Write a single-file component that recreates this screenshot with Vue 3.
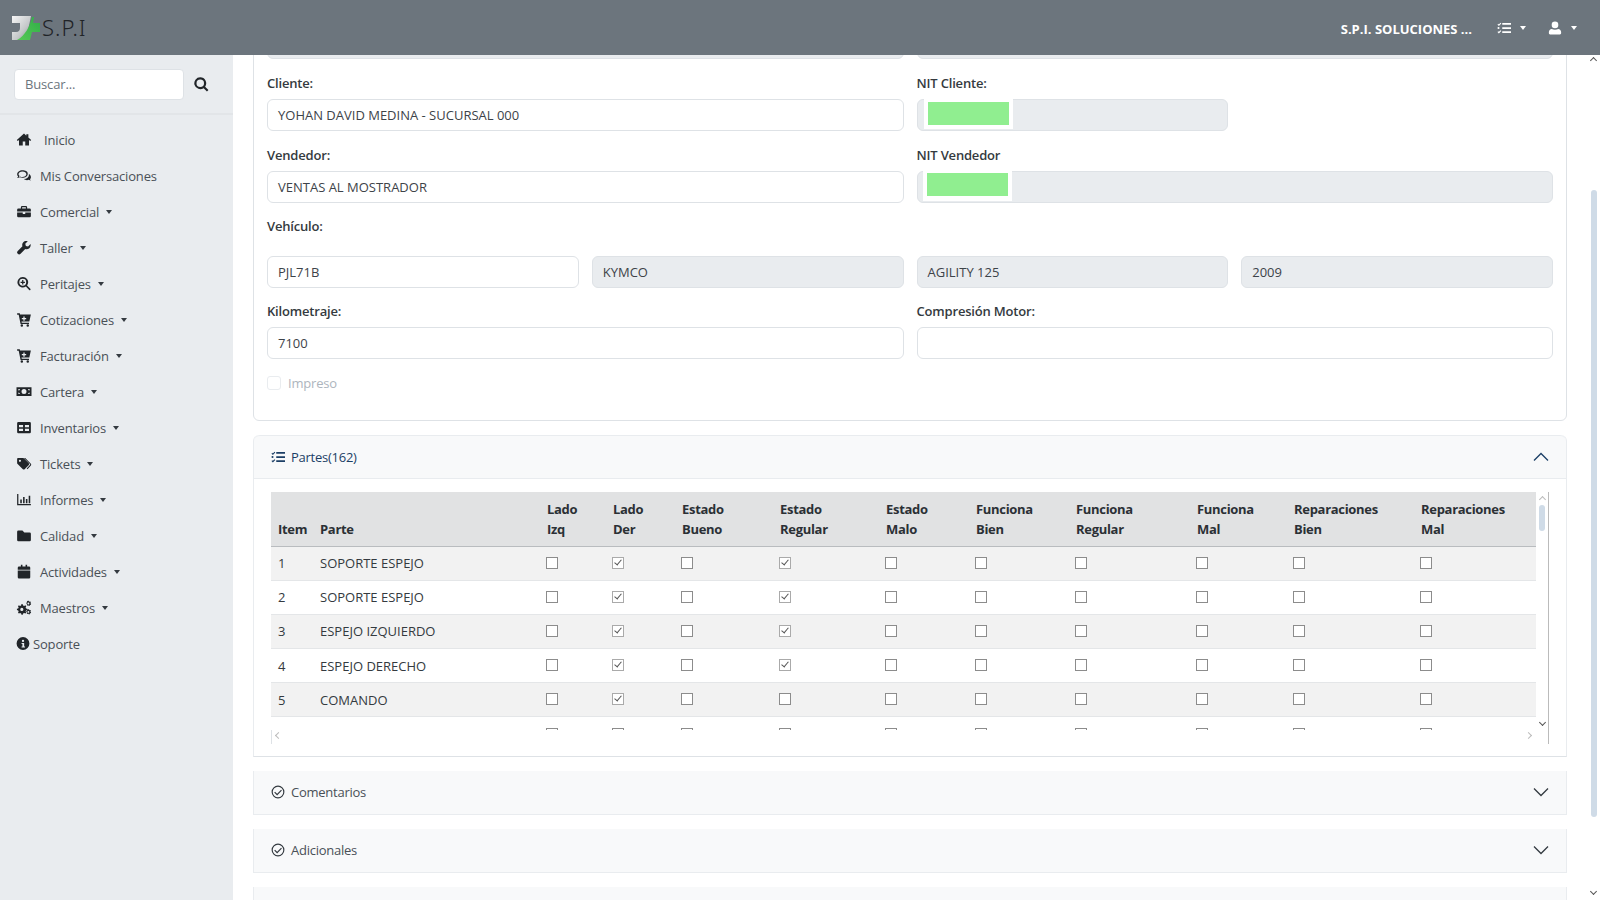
<script setup>
const icons = {
  home: 'M12 2.500 .5 12.600l1.500 1.700L4 12.600V21.500h6v-6.500h4v6.500h6v-8.900l2 1.700 1.500-1.700L19 8.700V3.500h-3.300v2.300z',
  comments: 'M9.500 3.500C5 3.500 1 6.200 1 10c0 1.400.6 2.700 1.600 3.700-.4 1-1.100 1.800-1.600 2.400 1.600 0 3.100-.6 4.200-1.300 1.200.5 2.800.8 4.300.8 4.500 0 8.500-2.700 8.500-6.600S14 3.500 9.500 3.500zm0 2c3.500 0 6.300 2 6.300 4.500s-2.800 4.400-6.300 4.400c-1.300 0-2.700-.3-3.900-1-.6.5-1.100.8-1.600 1 .4-.7.6-1.300.7-1.900C3.700 11.700 3.200 11 3.200 10c0-2.500 2.800-4.500 6.300-4.500zM19.500 9c.2.600.4 1.200.4 2 0 3.400-3.300 6.100-7.900 6.700 1.100 1.100 2.800 1.800 4.800 1.800 1 0 2-.2 2.900-.6 1 .6 2.100 1 3.300 1-.5-.5-1-1.200-1.400-2 1-.9 1.500-2 1.500-3.200 0-2.300-1.300-4.400-3.600-5.700z',
  briefcase: 'M9 3h6a2 2 0 0 1 2 2v2h4a2 2 0 0 1 2 2v3H1V9a2 2 0 0 1 2-2h4V5a2 2 0 0 1 2-2zm0 2v2h6V5zM1 13.500h9V16h4v-2.500h9V19a2 2 0 0 1-2 2H3a2 2 0 0 1-2-2z',
  wrench: 'M22.500 6.500 18.500 10.500 15 9.500 14 6 18 2C15.500 1 12.500 1.500 10.800 3.500 9 5.300 8.700 7.900 9.500 10L2 17.500a3 3 0 0 0 4.500 4.500l7.500-7.500c2.100.8 4.700.4 6.500-1.400 2-1.800 2.500-4.200 2-6.600z',
  searchPlus: 'M10 1.500a8.500 8.500 0 1 0 5 15.400l5.300 5.300a1.200 1.200 0 0 0 1.800-1.800l-5.200-5.300A8.500 8.500 0 0 0 10 1.500zm0 3a5.500 5.500 0 1 1 0 11 5.500 5.500 0 0 1 0-11zM9 6.500v2.500H6.500v2H9v2.500h2V11h2.500V9H11V6.500z',
  cart: 'M1 2h4.200l.6 2H23l-2.500 11H8l.4 2H20v2.200H6.500L3.500 4.200H1zM11 7v2.500H8.500v2H11V14h2v-2.500h2.500v-2H13V7zM8.500 19.500a2 2 0 1 1 0 4 2 2 0 0 1 0-4zM18 19.500a2 2 0 1 1 0 4 2 2 0 0 1 0-4z',
  money: 'M0 5h24v14H0zm12 3a4 4 0 1 0 0 8 4 4 0 0 0 0-8zM3 8v2.500A2.500 2.500 0 0 0 5.500 8zm15.500 0A2.500 2.500 0 0 0 21 10.500V8zM3 13.500V16h2.500A2.500 2.500 0 0 0 3 13.500zM21 13.500A2.500 2.500 0 0 0 18.500 16H21z',
  table: 'M3 3h18a2 2 0 0 1 2 2v14a2 2 0 0 1-2 2H3a2 2 0 0 1-2-2V5a2 2 0 0 1 2-2zm1 5v3.500h6.500V8zm9.500 0v3.500H20V8zM4 14v3.500h6.500V14zm9.500 0v3.500H20V14z',
  tags: 'M1 4.500A1.500 1.500 0 0 1 2.500 3h7.800a2 2 0 0 1 1.400.6l8 8a2 2 0 0 1 0 2.800l-6.700 6.700a2 2 0 0 1-2.800 0l-8-8A2 2 0 0 1 1 11.300zM5.500 6a1.700 1.700 0 1 0 0 3.400 1.700 1.700 0 0 0 0-3.400zM14 3l9 9.300a2.300 2.300 0 0 1 0 3L17.500 21l-1.200-1.200 5.200-5.300a1 1 0 0 0 0-1.600L12 3z',
  chart: 'M1 3h2v16h20v2H1zM6 12h2.500v6H6zM10.500 8H13v10h-2.500zM15 11h2.500v7H15zM19.500 6H22v12h-2.500z',
  folder: 'M3 4h6.500l3 3H21a2 2 0 0 1 2 2v10a2 2 0 0 1-2 2H3a2 2 0 0 1-2-2V6a2 2 0 0 1 2-2z',
  calendar: 'M7 1h2.500v3h5V1H17v3h3a2 2 0 0 1 2 2v3H2V6a2 2 0 0 1 2-2h3zM2 10.500h20V21a2 2 0 0 1-2 2H4a2 2 0 0 1-2-2z',
  cogs: 'M8 6.500l2 .2.600 2 1.700.8 1.800-1 1.500 1.500-1 1.800.7 1.700 2 .6v2l-2 .6-.7 1.700 1 1.800-1.500 1.500-1.800-1-1.700.7-.6 2h-2l-.6-2-1.700-.7-1.800 1-1.500-1.500 1-1.800-.7-1.700-2-.6v-2l2-.6.700-1.700-1-1.800L3.800 8.500l1.800 1 1.700-.8zM8.500 12.500a2.500 2.500 0 1 0 0 5 2.500 2.500 0 0 0 0-5zM19 1l1 .2.300 1 1 .5 1-.4.800 1.200-.7.800.1 1.200.9.500-.3 1.400-1 .1-.8.800-.1 1-1.400.2-.500-.9-1.100-.2-.9.600-1-1 .6-.9-.3-1.100-1-.3V4.300l1-.3.500-1-.5-.900 1.100-.900.900.7zm0 3a1.500 1.500 0 1 0 0 3 1.500 1.500 0 0 0 0-3zM19 14.500l1 .2.300 1 1 .5 1-.4.800 1.200-.7.800.1 1.200.9.500-.3 1.400-1 .1-.8.800-.1 1-1.400.2-.500-.9-1.100-.2-.9.600-1-1 .6-.9-.3-1.100-1-.3v-1.400l1-.3.500-1-.5-.900 1.100-.900.900.7zm0 3a1.500 1.500 0 1 0 0 3 1.500 1.500 0 0 0 0-3z',
  info: 'M12 1a11 11 0 1 0 0 22 11 11 0 0 0 0-22zm0 4.500a2 2 0 1 1 0 4 2 2 0 0 1 0-4zM9.500 11H14v6h1.500v2h-6v-2H11v-4H9.500z',
  tasks: 'M9 3.500h15v3H9zM9 10.500h15v3H9zM9 17.500h15v3H9zM2.200 4.800l1 1L6 3l1.400 1.400-4.200 4.200L.8 6.200zM.8 12a1.800 1.800 0 1 1 3.600 0 1.800 1.800 0 0 1-3.600 0zM2.200 17.500l1 1L6 15.700l1.400 1.400-4.200 4.200L.8 18.900z',
  user: 'M12 1a5.700 5.700 0 1 1 0 11.400A5.700 5.700 0 0 1 12 1zM6.500 13.500C8 14.300 10 14.800 12 14.800s4-.5 5.500-1.300c3 .3 5 2.700 5 5.500V21a2 2 0 0 1-2 2h-17a2 2 0 0 1-2-2v-2c0-2.800 2-5.200 5-5.500z',
  search: 'M10 .5a9.500 9.500 0 1 0 5.400 17.300l5.300 5.300 2.400-2.400-5.300-5.300A9.500 9.500 0 0 0 10 .5zm0 3.500a6 6 0 1 1 0 12 6 6 0 0 1 0-12z',
  check: 'M12 1a11 11 0 1 0 0 22 11 11 0 0 0 0-22zm0 2a9 9 0 1 1 0 18 9 9 0 0 1 0-18zm5.300 5L10.500 14.800 7 11.400l-1.500 1.400 5 5 8.200-8.300z'
}
const nav = [
  { label: 'Inicio', icon: 'home', caret: false, cls: 'wide' },
  { label: 'Mis Conversaciones', icon: 'comments', caret: false },
  { label: 'Comercial', icon: 'briefcase', caret: true },
  { label: 'Taller', icon: 'wrench', caret: true },
  { label: 'Peritajes', icon: 'searchPlus', caret: true },
  { label: 'Cotizaciones', icon: 'cart', caret: true },
  { label: 'Facturación', icon: 'cart', caret: true },
  { label: 'Cartera', icon: 'money', caret: true },
  { label: 'Inventarios', icon: 'table', caret: true },
  { label: 'Tickets', icon: 'tags', caret: true },
  { label: 'Informes', icon: 'chart', caret: true },
  { label: 'Calidad', icon: 'folder', caret: true },
  { label: 'Actividades', icon: 'calendar', caret: true },
  { label: 'Maestros', icon: 'cogs', caret: true },
  { label: 'Soporte', icon: 'info', caret: false, cls: 'narrow' }
]
const cols = [42, 227, 66, 69, 98, 106, 90, 100, 121, 97, 127, 123]
const heads = [
  ['Item'], ['Parte'], ['Lado', 'Izq'], ['Lado', 'Der'], ['Estado', 'Bueno'], ['Estado', 'Regular'],
  ['Estado', 'Malo'], ['Funciona', 'Bien'], ['Funciona', 'Regular'], ['Funciona', 'Mal'],
  ['Reparaciones', 'Bien'], ['Reparaciones', 'Mal']
]
const rows = [
  { item: '1', parte: 'SOPORTE ESPEJO', checks: [1, 3] },
  { item: '2', parte: 'SOPORTE ESPEJO', checks: [1, 3] },
  { item: '3', parte: 'ESPEJO IZQUIERDO', checks: [1, 3] },
  { item: '4', parte: 'ESPEJO DERECHO', checks: [1, 3] },
  { item: '5', parte: 'COMANDO', checks: [1] },
  { item: '', parte: '', checks: [] }
]
const boxes = [0, 1, 2, 3, 4, 5, 6, 7, 8, 9]
</script>

<template>
  <div class="page">
    <header class="topbar">
      <div class="brand">
        <svg class="logo" viewBox="0 0 30 28">
          <defs>
            <linearGradient id="lg" x1="0" y1="0" x2="1" y2="1">
              <stop offset="0" stop-color="#f6f6f6" />
              <stop offset="0.6" stop-color="#c4c7c9" />
              <stop offset="1" stop-color="#7f858a" />
            </linearGradient>
            <linearGradient id="lgg" x1="1" y1="0" x2="0" y2="1">
              <stop offset="0" stop-color="#2fae47" />
              <stop offset="1" stop-color="#57c957" />
            </linearGradient>
          </defs>
          <path d="M1 2H20L15 26H1V18H5C8 18 9 16 9 14V9H1Z" fill="url(#lg)" />
          <path d="M21 3H23L22 9H29V18H21L19 26H6C14 22 19 12 21 3Z" fill="url(#lgg)" />
        </svg>
        <span class="brand-name">S.P.I</span>
      </div>
      <div class="top-right">
        <strong class="company">S.P.I. SOLUCIONES ...</strong>
        <span class="top-btn"><svg class="ico ico-top" viewBox="0 0 24 24"><path :d="icons.tasks" /></svg><i class="caret" /></span>
        <span class="top-btn"><svg class="ico ico-top" viewBox="0 0 24 24"><path :d="icons.user" /></svg><i class="caret" /></span>
      </div>
    </header>

    <div class="body-row">
      <aside class="sidebar">
        <div class="search-row">
          <div class="search-input">Buscar...</div>
          <svg class="ico search-ico" viewBox="0 0 24 24"><path :d="icons.search" /></svg>
        </div>
        <nav class="nav">
          <a v-for="n in nav" :key="n.label" class="nav-item" :class="n.cls">
            <svg class="ico nav-ico" viewBox="0 0 24 24"><path :d="icons[n.icon]" /></svg>
            <span class="nav-label">{{ n.label }}</span>
            <i v-if="n.caret" class="caret dark" />
          </a>
        </nav>
      </aside>

      <main class="main">
        <div class="content">
          <section class="card">
            <div class="grid two peek">
              <div class="input disabled" />
              <div class="input disabled" />
            </div>

            <div class="grid two">
              <div>
                <label class="label">Cliente:</label>
                <div class="input">YOHAN DAVID MEDINA - SUCURSAL 000</div>
              </div>
              <div>
                <label class="label">NIT Cliente:</label>
                <div class="grid two inner">
                  <div class="input disabled nit"><span class="mask"><span class="green" /></span></div>
                </div>
              </div>
            </div>

            <div class="grid two">
              <div>
                <label class="label">Vendedor:</label>
                <div class="input">VENTAS AL MOSTRADOR</div>
              </div>
              <div>
                <label class="label">NIT Vendedor</label>
                <div class="input disabled nit seller"><span class="mask"><span class="green" /></span></div>
              </div>
            </div>

            <label class="label vehicle-label">Vehículo:</label>
            <div class="grid four">
              <div class="input">PJL71B</div>
              <div class="input disabled">KYMCO</div>
              <div class="input disabled">AGILITY 125</div>
              <div class="input disabled">2009</div>
            </div>

            <div class="grid two">
              <div>
                <label class="label">Kilometraje:</label>
                <div class="input">7100</div>
              </div>
              <div>
                <label class="label">Compresión Motor:</label>
                <div class="input" />
              </div>
            </div>

            <div class="impreso"><span class="soft-check" /><span>Impreso</span></div>
          </section>

          <section class="acc open">
            <div class="acc-head active">
              <svg class="ico acc-ico" viewBox="0 0 24 24"><path :d="icons.tasks" /></svg>
              <span>Partes(162)</span>
              <svg class="chev up" viewBox="0 0 16 10"><path d="M1 1.500 8 8.500 15 1.500" /></svg>
            </div>
            <div class="acc-body">
              <div class="table-frame">
                <div class="table-clip">
                  <table class="parts">
                    <colgroup>
                      <col v-for="(c, i) in cols" :key="i" :style="{ width: c + 'px' }" />
                    </colgroup>
                    <thead>
                      <tr>
                        <th v-for="(h, i) in heads" :key="i">
                          <template v-for="(line, j) in h" :key="j">{{ line }}<br v-if="j < h.length - 1" /></template>
                        </th>
                      </tr>
                    </thead>
                    <tbody>
                      <tr v-for="(r, idx) in rows" :key="idx">
                        <td>{{ r.item }}</td>
                        <td>{{ r.parte }}</td>
                        <td v-for="b in boxes" :key="b">
                          <span class="cb" :class="{ on: r.checks.includes(b) }" />
                        </td>
                      </tr>
                    </tbody>
                  </table>
                </div>
                <div class="hbar"><span class="arrow-l" /><span class="arrow-r" /></div>
                <div class="vbar">
                  <span class="vb-up" />
                  <span class="vb-thumb" />
                  <span class="vb-down" />
                </div>
              </div>
            </div>
          </section>

          <section class="acc">
            <div class="acc-head">
              <svg class="ico acc-ico" viewBox="0 0 24 24"><path :d="icons.check" /></svg>
              <span>Comentarios</span>
              <svg class="chev" viewBox="0 0 16 10"><path d="M1 1.500 8 8.500 15 1.500" /></svg>
            </div>
          </section>
          <section class="acc">
            <div class="acc-head">
              <svg class="ico acc-ico" viewBox="0 0 24 24"><path :d="icons.check" /></svg>
              <span>Adicionales</span>
              <svg class="chev" viewBox="0 0 16 10"><path d="M1 1.500 8 8.500 15 1.500" /></svg>
            </div>
          </section>
          <section class="acc">
            <div class="acc-head" />
          </section>
        </div>

        <div class="page-scroll">
          <span class="ps-up" />
          <span class="ps-thumb" />
          <span class="ps-down" />
        </div>
      </main>
    </div>
  </div>
</template>

<style>
html, body { margin: 0; background: #fff; overflow: hidden; }
</style>

<style scoped>
.page {
  width: 1600px;
  height: 900px;
  display: flex;
  flex-direction: column;
  font-family: "Open Sans", "Noto Sans", "Liberation Sans", sans-serif;
  font-size: 13px;
  color: #212529;
  overflow: hidden;
}
.ico { fill: currentColor; flex: none; display: block; }
.topbar {
  height: 55px;
  flex: none;
  background: #6c757d;
  display: flex;
  align-items: center;
  justify-content: space-between;
  position: relative;
  z-index: 3;
}
.brand { display: flex; align-items: center; margin-left: 11px; }
.logo { width: 30px; height: 28px; }
.brand-name {
  font-family: "Noto Sans", sans-serif;
  font-size: 22px;
  font-weight: 300;
  letter-spacing: 1px;
  color: #1f2327;
  margin-left: 1px;
  margin-top: -2px;
}
.top-right { display: flex; align-items: center; color: #fff; padding-right: 23px; }
.company { font-size: 13px; font-weight: 700; margin-right: 25px; padding-top: 2px; }
.top-btn { display: flex; align-items: center; }
.top-btn + .top-btn { margin-left: 22px; }
.ico-top { width: 14px; height: 14px; }
.caret {
  display: inline-block;
  width: 0;
  height: 0;
  margin-left: 9px;
  border-top: 4px solid currentColor;
  border-left: 3.500px solid transparent;
  border-right: 3.500px solid transparent;
}
.body-row { flex: 1; display: flex; min-height: 0; }
.sidebar { width: 233px; flex: none; background: #e9ecef; }
.search-row {
  height: 60px;
  padding: 14px 24px 0 14px;
  box-sizing: border-box;
  display: flex;
  align-items: flex-start;
  border-bottom: 2px solid #e2e5e8;
}
.search-input {
  width: 171px;
  height: 31px;
  box-sizing: border-box;
  background: #fff;
  border: 1px solid #dee2e6;
  border-radius: 4px;
  padding-left: 10px;
  line-height: 29px;
  color: #6c757d;
  letter-spacing: -0.15px;
}
.search-ico { width: 15px; height: 15px; margin: 8px 0 0 10px; color: #212529; }
.nav { display: flex; flex-direction: column; padding-top: 6.500px; }
.nav-item { height: 36px; display: flex; align-items: center; padding-left: 16px; color: #495057; letter-spacing: -0.17px; }
.nav-ico { width: 16px; height: 15px; color: #212529; margin-right: 8px; }
.nav-item.wide .nav-ico { margin-right: 12px; }
.nav-item.narrow .nav-ico { width: 14px; margin-right: 3px; }
.caret.dark { color: #343a40; margin-left: 7px; }

.main { flex: 1; position: relative; overflow: hidden; }
.content {
  padding: 0 33px 0 20px;
  margin-top: -29px;
  display: flex;
  flex-direction: column;
  gap: 14px;
}
.card {
  border: 1px solid #dee2e6;
  border-radius: 0 0 6px 6px;
  padding: 0 13px 0;
  height: 395px;
  box-sizing: border-box;
}
.grid { display: grid; column-gap: 13px; }
.grid.two { grid-template-columns: 1fr 1fr; margin-bottom: 12px; }
.grid.four { grid-template-columns: repeat(4, 1fr); margin-bottom: 11px; }
.grid.inner { margin-bottom: 0; }
.label {
  display: block;
  font-weight: 600;
  line-height: 20px;
  padding: 1.500px 0 6.500px;
  color: #343a40;
  letter-spacing: -0.18px;
}
.vehicle-label { padding: 1px 0 20px; }
.input {
  height: 32px;
  box-sizing: border-box;
  border: 1px solid #dee2e6;
  border-radius: 6px;
  background: #fff;
  padding: 0 10px;
  line-height: 30px;
  color: #3d4349;
  white-space: nowrap;
}
.input.disabled { background: #e9ecef; }
.peek { height: 32px; }
.nit { position: relative; }
.mask {
  position: absolute;
  left: 6px;
  top: -1px;
  width: 89px;
  height: 30px;
  box-sizing: border-box;
  padding: 3px 0 0 4px;
  background: #fff;
}
.seller .mask { left: 5px; padding-top: 2px; }
.green { display: block; width: 81px; height: 23px; background: #90ee90; }
.impreso {
  display: flex;
  align-items: center;
  height: 20px;
  margin-top: 14px;
  color: #adb5bd;
  letter-spacing: -0.2px;
}
.soft-check {
  width: 12px;
  height: 12px;
  border: 1px solid #e9ecef;
  border-radius: 3px;
  margin-right: 7px;
}

.acc { border: 1px solid #e9ecef; border-top: none; border-radius: 0; }
.acc-head {
  height: 43px;
  box-sizing: border-box;
  background: #f8f9fa;
  display: flex;
  align-items: center;
  padding: 0 17px;
  color: #495057;
  position: relative;
  letter-spacing: -0.25px;
}
.acc-head.active { color: #1c3f66; height: 43.500px; padding-top: 1px; border-top: 1px solid #e9ecef; border-bottom: 1px solid #e9ecef; border-radius: 6px 6px 0 0; }
.acc.open { border-radius: 6px 6px 0 0; border-bottom: 1px solid #dee2e6; }
.acc-ico { width: 14px; height: 14px; margin-right: 6px; color: #343a40; }
.active .acc-ico { color: #1c3f66; }
.chev {
  position: absolute;
  right: 17px;
  top: 16px;
  width: 16px;
  height: 10px;
  fill: none;
  stroke: #343a40;
  stroke-width: 1.300;
}
.chev.up { transform: rotate(180deg); stroke: #1c3f66; }
.acc-body { padding: 13px 17px 12px; }
.table-frame {
  position: relative;
  height: 252px;
  box-sizing: border-box;
  border-right: 1px solid #bbb;
  padding-right: 12px;
}
.table-clip { height: 238px; overflow: hidden; }
.parts {
  border-collapse: collapse;
  table-layout: fixed;
  width: 1266px;
}
.parts th {
  background: #e1e2e3;
  text-align: left;
  vertical-align: bottom;
  font-weight: 700;
  padding: 7px 7px 7px;
  line-height: 20px;
  border-bottom: 1px solid #b9bcbf;
  color: #2b3035;
  letter-spacing: -0.3px;
}
.parts td {
  height: 34.200px;
  box-sizing: border-box;
  padding: 0 7px;
  border-bottom: 1px solid #e4e6e8;
  color: #343a40;
}
.parts tbody tr:nth-child(odd) td { background: #f2f2f2; }
.parts tbody tr:last-child td { background: #fff; border-bottom: none; }
.cb {
  display: block;
  width: 12px;
  height: 12px;
  box-sizing: border-box;
  border: 1px solid #8c8c8c;
  background: #fff;
  position: relative;
  margin: -1px 0 0 -1px;
}
.cb.on { border-color: #aaa; }
.cb.on::after {
  content: "";
  position: absolute;
  left: 3px;
  top: 0;
  width: 3px;
  height: 6px;
  border: solid #555;
  border-width: 0 1px 1px 0;
  transform: rotate(40deg);
}
.hbar {
  height: 14px;
  position: relative;
  border-left: 1px solid #dee2e6;
}
.arrow-l, .arrow-r, .vb-up, .vb-down, .ps-up, .ps-down {
  position: absolute;
  width: 5px;
  height: 5px;
  box-sizing: border-box;
}
.arrow-l { left: 4px; top: 3px; border-left: 1.500px solid #bbb; border-bottom: 1.500px solid #bbb; transform: rotate(45deg); }
.arrow-r { right: 5px; top: 3px; border-right: 1.500px solid #bbb; border-top: 1.500px solid #bbb; transform: rotate(45deg); }
.vbar { position: absolute; right: 0; top: 0; width: 12px; height: 100%; }
.vb-up { left: 3.500px; top: 5px; border-left: 1.500px solid #bbb; border-top: 1.500px solid #bbb; transform: rotate(45deg); }
.vb-thumb { position: absolute; left: 2.500px; top: 13px; width: 6px; height: 26px; border-radius: 3px; background: #cfdbe7; }
.vb-down { left: 3.500px; bottom: 19px; border-right: 1.500px solid #555; border-bottom: 1.500px solid #555; transform: rotate(45deg); }

.page-scroll { position: absolute; right: 0; top: 0; bottom: 0; width: 14px; background: #fff; }
.ps-up { left: 5px; top: 3px; border-left: 1.500px solid #555; border-top: 1.500px solid #555; transform: rotate(45deg); }
.ps-thumb { position: absolute; left: 5px; top: 135px; width: 6px; height: 627px; border-radius: 3px; background: #cfdbe7; }
.ps-down { left: 5px; bottom: 6px; border-right: 1.500px solid #555; border-bottom: 1.500px solid #555; transform: rotate(45deg); }
</style>
